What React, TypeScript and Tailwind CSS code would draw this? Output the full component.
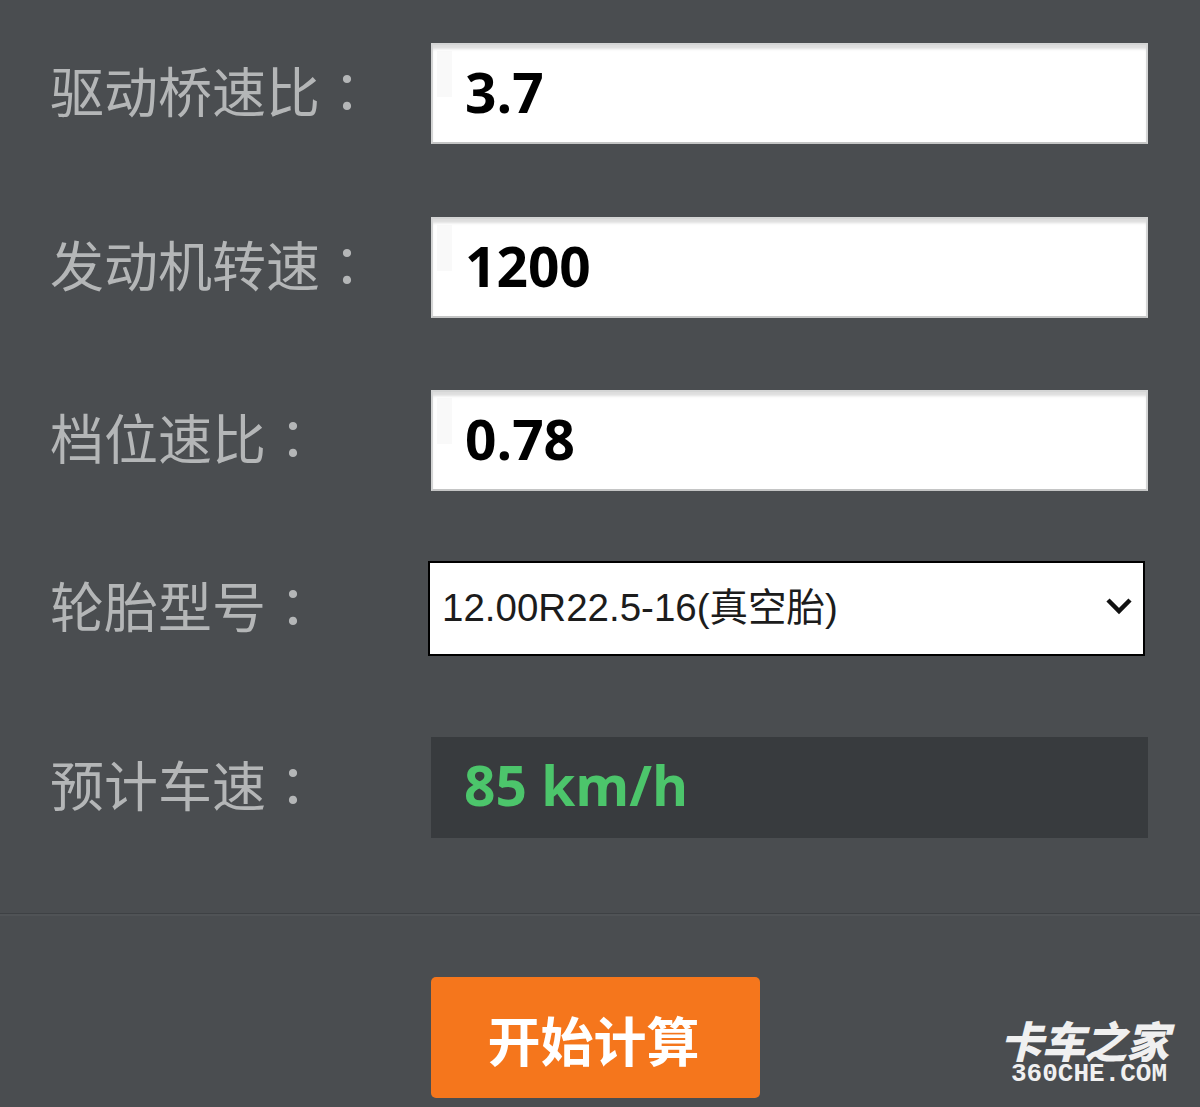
import React from "react";

const labelClass = "w-[381px] shrink-0 pb-[7px] text-[54px] leading-none text-[#b4b6b7] font-['Noto_Sans_CJK_SC',sans-serif]";
const inputClass =
  "block w-[717px] h-[101px] pl-[32px] pb-[5px] border-2 border-[#d4d5d5] border-b-[#c4c5c5] text-black text-[55px] font-bold font-['Open_Sans','Noto_Sans_CJK_SC',sans-serif] outline-none bg-white bg-[linear-gradient(#f9f9f9,#f9f9f9)] bg-no-repeat bg-[length:15px_46px] bg-[position:4px_6px] shadow-[inset_0_5px_3px_-1px_#dddddd]";

const Label: React.FC<{ text: string }> = ({ text }) => (
  <div className={labelClass}>
    {text}
    <span className="font-['Noto_Sans_CJK_TC',sans-serif]">：</span>
  </div>
);

const Row: React.FC<{ label: string; value: string; className: string }> = ({ label, value, className }) => (
  <div className={`flex items-center h-[101px] ${className}`}>
    <Label text={label} />
    <input className={inputClass} defaultValue={value} readOnly />
  </div>
);

const App: React.FC = () => {
  return (
    <div className="w-[1200px] h-[1107px] overflow-hidden bg-[#4a4d50] pt-[43px] pl-[50px]">
      <Row label="驱动桥速比" value="3.7" className="mb-[73px]" />
      <Row label="发动机转速" value="1200" className="mb-[72px]" />
      <Row label="档位速比" value="0.78" className="mb-[70px]" />

      <div className="flex items-center h-[95px] mb-[81px]">
        <Label text="轮胎型号" />
        <div className="relative -ml-[3px] w-[717px] h-[95px]">
          <select
            defaultValue="12.00R22.5-16(真空胎)"
            className="block w-full h-full appearance-none bg-white border-2 border-black pl-[12px] pb-[2px] text-[38.5px] text-[#1c1c1c] font-['Liberation_Sans','Noto_Sans_CJK_SC',sans-serif] outline-none"
          >
            <option>12.00R22.5-16(真空胎)</option>
          </select>
          <svg className="absolute right-[12px] top-[35px] w-[28px] h-[20px]" viewBox="0 0 28 20" fill="none">
            <path d="M3 4l11 11L25 4" stroke="#111" strokeWidth="4.5" />
          </svg>
        </div>
      </div>

      <div className="flex items-center h-[101px]">
        <Label text="预计车速" />
        <div className="w-[717px] h-[101px] flex items-center pl-[33px] pb-[4px] bg-[#383b3e] text-[#4cc56b] text-[55px] font-bold font-['Open_Sans',sans-serif]">
          85 km/h
        </div>
      </div>

      <div className="-ml-[50px] mt-[75px] h-[3px] border-t border-[#3e4144] border-b-2 border-b-[#505356]" />

      <div className="flex mt-[61px]">
        <div className="w-[381px] shrink-0" />
        <button className="w-[329px] h-[121px] pt-[5px] pr-[4px] rounded-[5px] bg-[#f5761c] text-white text-[53px] font-bold font-['Noto_Sans_CJK_SC',sans-serif]">
          开始计算
        </button>
        <div className="ml-[246px] pt-[37px] flex flex-col items-center w-[166px] text-[#f0f0f0]">
          <div className="pr-[10px] text-[43px] leading-[50px] font-black italic tracking-[-1px] whitespace-nowrap font-['Noto_Sans_CJK_SC',sans-serif]">
            卡车之家
          </div>
          <div className="text-[26px] leading-[20px] font-bold whitespace-nowrap font-['Liberation_Mono',monospace]">
            360CHE.COM
          </div>
        </div>
      </div>
    </div>
  );
};

export default App;
